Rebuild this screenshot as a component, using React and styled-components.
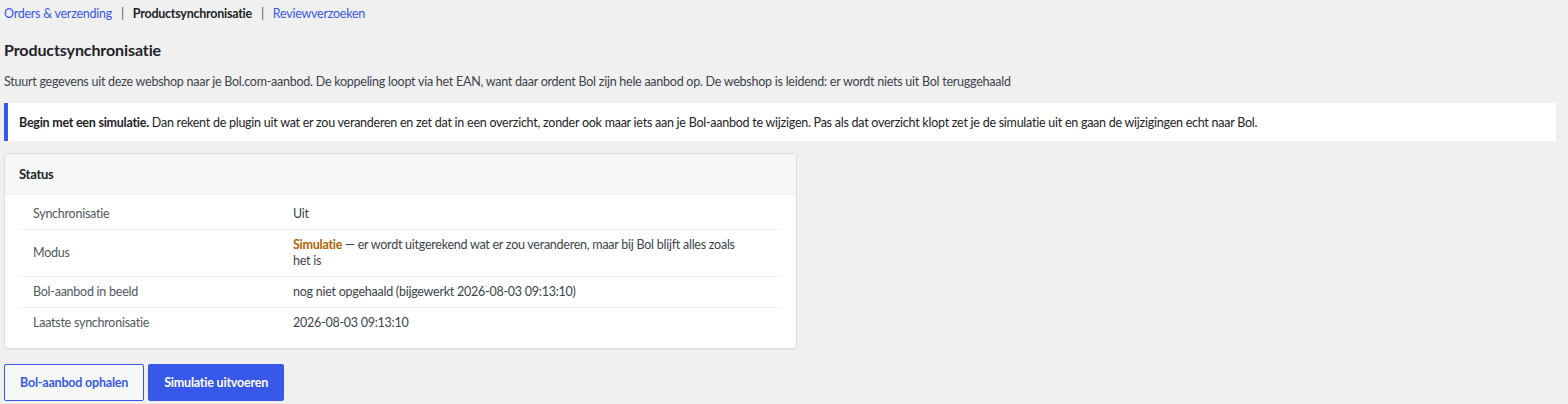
import React from 'react';
import styled, { createGlobalStyle } from 'styled-components';

const GlobalStyle = createGlobalStyle`
  html, body {
    margin: 0;
    padding: 0;
    background: #f0f0f1;
  }
  body {
    font-family: Lato, "Noto Sans", "Liberation Sans", sans-serif;
    font-size: 12.5px;
    letter-spacing: -0.25px;
    color: #3c434a;
  }
`;

const App = () => {
  const rows = [
    { label: 'Synchronisatie', value: 'Uit' },
    {
      label: 'Modus',
      value: (
        <>
          <Highlight>Simulatie</Highlight> — er wordt uitgerekend wat er zou veranderen, maar bij Bol blijft alles zoals het is
        </>
      ),
    },
    { label: 'Bol-aanbod in beeld', value: 'nog niet opgehaald (bijgewerkt 2026-08-03 09:13:10)' },
    { label: 'Laatste synchronisatie', value: '2026-08-03 09:13:10' },
  ];

  return (
    <Page>
      <GlobalStyle />
      <SubNav>
        <NavLink href="#">Orders &amp; verzending</NavLink>
        <Sep>|</Sep>
        <NavCurrent>Productsynchronisatie</NavCurrent>
        <Sep>|</Sep>
        <NavLink href="#">Reviewverzoeken</NavLink>
      </SubNav>

      <Title>Productsynchronisatie</Title>
      <Intro>
        Stuurt gegevens uit deze webshop naar je Bol.com-aanbod. De koppeling loopt via het EAN, want daar ordent Bol zijn hele aanbod op. De webshop is leidend: er wordt niets uit Bol teruggehaald
      </Intro>

      <Notice>
        <p>
          <strong>Begin met een simulatie.</strong> Dan rekent de plugin uit wat er zou veranderen en zet dat in een overzicht, zonder ook maar iets aan je Bol-aanbod te wijzigen. Pas als dat overzicht klopt zet je de simulatie uit en gaan de wijzigingen echt naar Bol.
        </p>
      </Notice>

      <Card>
        <CardHeader>Status</CardHeader>
        <CardBody>
          <StatusTable>
            <tbody>
              {rows.map((row) => (
                <Row key={row.label}>
                  <LabelCell>{row.label}</LabelCell>
                  <ValueCell>{row.value}</ValueCell>
                </Row>
              ))}
            </tbody>
          </StatusTable>
        </CardBody>
      </Card>

      <Actions>
        <Button>Bol-aanbod ophalen</Button>
        <Button $primary>Simulatie uitvoeren</Button>
      </Actions>
    </Page>
  );
};

const Page = styled.div`
  padding: 0 12px 4px 4px;
`;

const SubNav = styled.nav`
  display: flex;
  align-items: center;
  height: 28px;
  line-height: 28px;
`;

const NavLink = styled.a`
  color: #3858e9;
  text-decoration: none;
`;

const NavCurrent = styled.span`
  color: #1d2327;
  font-weight: 700;
`;

const Sep = styled.span`
  color: #50575e;
  margin: 0 9px;
`;

const Title = styled.h1`
  margin: 8px 0 0;
  font-size: 16px;
  line-height: 28px;
  font-weight: 700;
  letter-spacing: -0.1px;
  color: #1d2327;
`;

const Intro = styled.p`
  margin: 8px 0 0;
  line-height: 20px;
`;

const Notice = styled.div`
  margin-top: 11px;
  background: #fff;
  border-left: 4px solid #3858e9;
  padding: 0 11px;
  height: 38px;
  display: flex;
  align-items: center;
  color: #1d2327;

  p {
    margin: 0;
  }

  strong {
    font-weight: 700;
  }
`;

const Card = styled.section`
  margin-top: 12px;
  width: 793px;
  box-sizing: border-box;
  background: #fff;
  border: 1px solid #dcdcde;
  border-radius: 4px;
  box-shadow: 0 1px 1px rgba(0, 0, 0, 0.04);
  overflow: hidden;
`;

const CardHeader = styled.header`
  height: 40px;
  display: flex;
  align-items: center;
  padding: 0 14px;
  background: #f6f7f7;
  border-bottom: 1px solid #f0f0f1;
  font-size: 13px;
  font-weight: 700;
  color: #1d2327;
`;

const CardBody = styled.div`
  padding: 4px 14px 10px;
`;

const StatusTable = styled.table`
  width: 100%;
  table-layout: fixed;
  border-collapse: collapse;
`;

const Row = styled.tr`
  border-bottom: 1px solid #f0f0f1;

  &:last-child {
    border-bottom: none;
  }
`;

const LabelCell = styled.td`
  box-sizing: border-box;
  width: 260px;
  padding: 7px 14px;
  line-height: 16px;
  vertical-align: middle;
  color: #50575e;
`;

const ValueCell = styled.td`
  padding: 7px 30px 7px 14px;
  line-height: 16px;
  color: #3c434a;
`;

const Highlight = styled.span`
  color: #b26200;
  font-weight: 700;
`;

const Actions = styled.div`
  display: flex;
  gap: 4px;
  margin-top: 15px;
`;

const Button = styled.button`
  height: 37px;
  padding: 0 15px;
  font-family: inherit;
  font-size: 12.5px;
  letter-spacing: -0.2px;
  font-weight: 700;
  border-radius: 2px;
  cursor: pointer;
  border: 1px solid #3858e9;
  background: ${(props) => (props.$primary ? '#3858e9' : '#f6f7f7')};
  color: ${(props) => (props.$primary ? '#fff' : '#3858e9')};
`;

export default App;
